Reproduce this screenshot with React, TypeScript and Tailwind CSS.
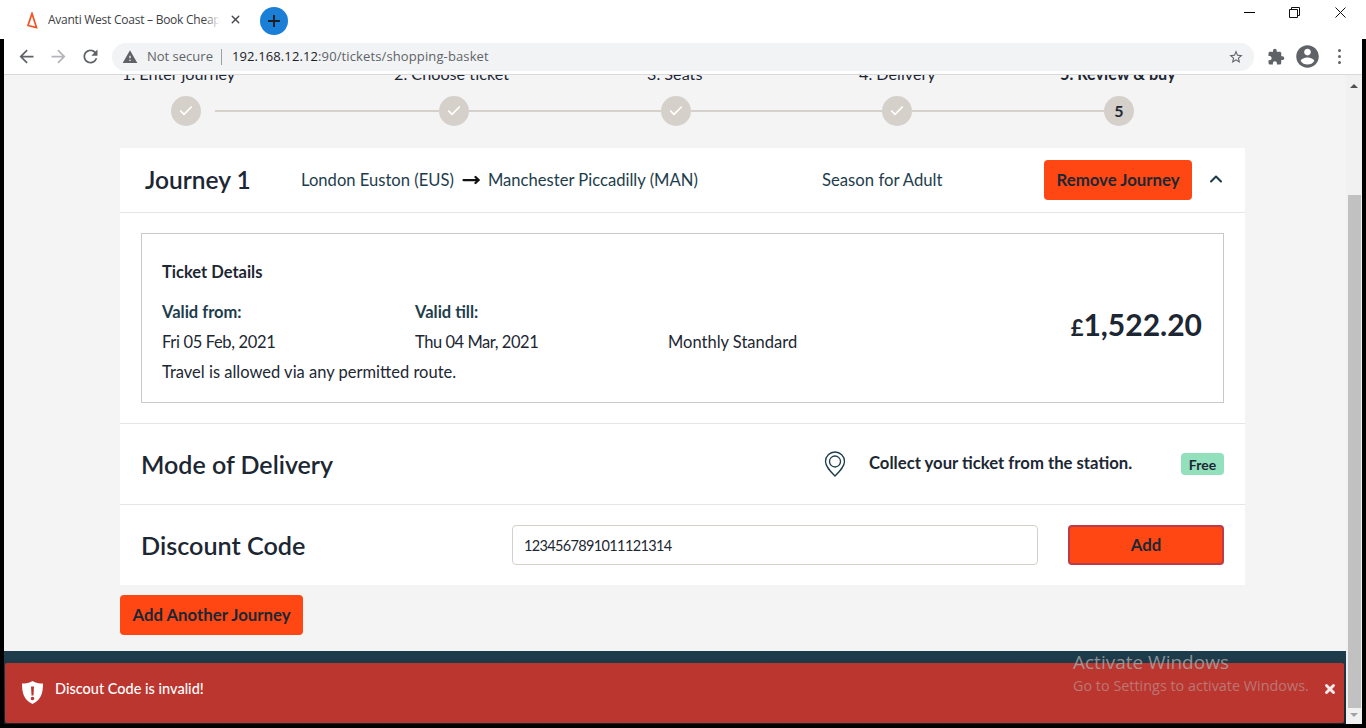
import { Check, ChevronUp, MoveRight, X } from "lucide-react";

const chromeFont = "font-['Open_Sans',sans-serif]";

const Mat = ({ d, size, color }: { d: string; size: number; color: string }) => (
  <svg width={size} height={size} viewBox="0 0 24 24" fill={color} className="shrink-0">
    <path d={d} />
  </svg>
);

const TabBar = () => (
  <div className={`h-[39px] bg-white flex items-center shrink-0 ${chromeFont}`}>
    <svg width="12" height="17" viewBox="0 0 12 17" fill="none" className="ml-[26px] mt-[2px]">
      <path d="M6 1.500 2 13.500 10.500 15.500Z" stroke="#f4511e" strokeWidth="1.700" />
    </svg>
    <div className="relative ml-[10px] w-[172px] overflow-hidden whitespace-nowrap text-[12px] tracking-[-0.25px] text-[#3c4043] mt-[1px]">
      Avanti West Coast – Book Cheap
      <span className="absolute right-0 top-0 h-full w-4 bg-gradient-to-r from-transparent to-white" />
    </div>
    <X size={13} strokeWidth={2.5} color="#45474a" className="ml-[9px]" />
    <div className="ml-[18px] mt-[3px] w-7 h-7 rounded-full bg-[#1a7fd6] flex items-center justify-center">
      <svg width="14" height="14" viewBox="0 0 14 14" stroke="#16202a" strokeWidth="2">
        <path d="M7 1v12M1 7h12" />
      </svg>
    </div>
    <div className="ml-auto flex items-center -mt-[15px]">
      <div className="w-[11px] h-px bg-black" />
      <svg width="11" height="11" viewBox="0 0 11 11" fill="none" stroke="#111" className="ml-[34px]">
        <path d="M.5 2.500h8v8h-8zM2.500 2.500v-2h8v8h-2" />
      </svg>
      <svg width="11" height="11" viewBox="0 0 11 11" fill="none" stroke="#111" className="ml-[35px] mr-[20px]">
        <path d="M.5.5l10 10M10.500.5l-10 10" />
      </svg>
    </div>
  </div>
);

const Toolbar = () => (
  <div className={`h-[36px] bg-white border-b border-[#d8d9da] flex items-center shrink-0 ${chromeFont}`}>
    <div className="ml-[12px]">
      <Mat size={21} color="#5f6368" d="M20 11H7.830l5.590-5.590L12 4l-8 8 8 8 1.410-1.410L7.830 13H20v-2z" />
    </div>
    <div className="ml-[11px]">
      <Mat size={21} color="#b4b6b9" d="M12 4l-1.410 1.410L16.170 11H4v2h12.170l-5.580 5.590L12 20l8-8z" />
    </div>
    <div className="ml-[11px]">
      <Mat
        size={21}
        color="#5f6368"
        d="M17.650 6.350C16.200 4.900 14.210 4 12 4c-4.420 0-7.990 3.580-7.990 8s3.570 8 7.990 8c3.730 0 6.840-2.550 7.730-6h-2.080c-.82 2.330-3.040 4-5.650 4-3.310 0-6-2.690-6-6s2.690-6 6-6c1.660 0 3.140.69 4.220 1.780L13 11h7V4l-2.350 2.350z"
      />
    </div>
    <div className="ml-[11px] w-[1142px] h-7 rounded-full bg-[#f1f3f4] flex items-center text-[13px]">
      <div className="ml-[10px]">
        <Mat size={16} color="#5f6368" d="M1 21h22L12 2 1 21zm12-3h-2v-2h2v2zm0-4h-2v-4h2v4z" />
      </div>
      <span className="ml-[9px] text-[#5f6368]">Not secure</span>
      <span className="ml-[8px] w-px h-[16px] bg-[#9aa0a6]" />
      <span className="ml-[10px] tracking-[0.12px] text-[#202124]">
        192.168.12.12<span className="text-[#5f6368]">:90/tickets/shopping-basket</span>
      </span>
      <div className="ml-auto mr-[10px]">
        <Mat
          size={16}
          color="#5f6368"
          d="M22 9.240l-7.190-.62L12 2 9.190 8.630 2 9.240l5.460 4.730L5.820 21 12 17.270 18.180 21l-1.630-7.030L22 9.240zM12 15.400l-3.760 2.270 1-4.280-3.320-2.880 4.380-.38L12 6.100l1.710 4.040 4.380.38-3.320 2.880 1 4.280L12 15.400z"
        />
      </div>
    </div>
    <div className="ml-[13px]">
      <Mat
        size={18}
        color="#5f6368"
        d="M20.500 11H19V7c0-1.100-.9-2-2-2h-4V3.500C13 2.120 11.880 1 10.500 1S8 2.120 8 3.500V5H4c-1.100 0-1.990.9-1.990 2v3.800H3.500c1.490 0 2.700 1.210 2.700 2.700s-1.210 2.700-2.700 2.700H2V20c0 1.100.9 2 2 2h3.800v-1.500c0-1.490 1.210-2.700 2.700-2.700 1.490 0 2.700 1.210 2.700 2.700V22H17c1.100 0 2-.9 2-2v-4h1.500c1.380 0 2.500-1.120 2.500-2.500S21.880 11 20.500 11z"
      />
    </div>
    <div className="ml-[9px]">
      <Mat
        size={27}
        color="#5f6368"
        d="M12 2C6.480 2 2 6.480 2 12s4.480 10 10 10 10-4.480 10-10S17.520 2 12 2zm0 3c1.660 0 3 1.340 3 3s-1.340 3-3 3-3-1.340-3-3 1.340-3 3-3zm0 14.200c-2.500 0-4.710-1.280-6-3.220.03-1.990 4-3.080 6-3.080 1.990 0 5.970 1.090 6 3.080-1.290 1.940-3.500 3.220-6 3.220z"
      />
    </div>
    <div className="ml-[17px] flex flex-col gap-[3px]">
      <span className="w-[3px] h-[3px] rounded-full bg-[#5f6368]" />
      <span className="w-[3px] h-[3px] rounded-full bg-[#5f6368]" />
      <span className="w-[3px] h-[3px] rounded-full bg-[#5f6368]" />
    </div>
  </div>
);

const StepCircle = ({ label }: { label?: string }) => (
  <div className="w-[30px] h-[30px] rounded-full bg-[#d5d0ca] flex items-center justify-center shrink-0 text-[16px] font-bold text-[#1c2733]">
    {label ? label : <Check size={16} strokeWidth={2.5} color="#fff" />}
  </div>
);

const Line = ({ w }: { w: string }) => <div className={`h-[2px] bg-[#d5d0ca] ${w}`} />;

const Steps = () => (
  <div className="h-[73px] shrink-0 text-[16.2px] text-[#1c2733]">
    <div className="-mt-[13px] ml-[118px] h-[22px] grid grid-cols-[272px_253px_212px_201px_auto] whitespace-nowrap">
      <span>1. Enter journey</span>
      <span>2. Choose ticket</span>
      <span>3. Seats</span>
      <span>4. Delivery</span>
      <span className="font-bold">5. Review &amp; buy</span>
    </div>
    <div className="mt-[12px] ml-[167px] flex items-center">
      <StepCircle />
      <div className="ml-[14px]" />
      <Line w="w-[224px]" />
      <StepCircle />
      <Line w="w-[192px]" />
      <StepCircle />
      <Line w="w-[191px]" />
      <StepCircle />
      <Line w="w-[192px]" />
      <StepCircle label="5" />
    </div>
  </div>
);

const OrangeButton = ({ children, className }: { children: string; className: string }) => (
  <button className={`bg-[#ff4713] rounded-[4px] text-[16.8px] font-bold text-[#1c2733] ${className}`}>
    {children}
  </button>
);

const JourneyCard = () => (
  <div className="ml-[116px] w-[1125px] bg-white shrink-0 text-[#1c2733]">
    <div className="h-[65px] flex items-center border-b border-[#e6e6e6]">
      <h2 className="ml-[25px] w-[156px] text-[24.5px] font-semibold pt-[1px]">Journey 1</h2>
      <div className="w-[521px] flex items-center text-[16.6px] text-[#1e3d4c] whitespace-nowrap">
        London Euston (EUS)
        <MoveRight size={18} strokeWidth={3} color="#111" className="mx-[8px]" />
        Manchester Piccadilly (MAN)
      </div>
      <span className="w-[222px] text-[16.7px] text-[#1e3d4c] pt-[1px]">Season for Adult</span>
      <OrangeButton className="w-[148px] h-10">Remove Journey</OrangeButton>
      <ChevronUp size={20} strokeWidth={2.5} color="#1e3d4c" className="ml-[14px] -mt-[2px]" />
    </div>
    <div className="px-[21px] py-[20px] border-b border-[#e6e6e6]">
      <div className="h-[170px] border border-[#c9c9c9] flex items-center justify-between pl-[20px] pr-[21px]">
        <div className="text-[16.5px] pt-[8px]">
          <div className="font-bold leading-[24px]">Ticket Details</div>
          <div className="mt-[16px] grid grid-cols-[253px_253px_auto] leading-[24px] text-[#1c2733]">
            <span className="font-bold text-[#1e3d4c]">Valid from:</span>
            <span className="font-bold text-[#1e3d4c]">Valid till:</span>
            <span />
            <span className="mt-[6px] tracking-[-0.35px]">Fri 05 Feb, 2021</span>
            <span className="mt-[6px] tracking-[-0.45px]">Thu 04 Mar, 2021</span>
            <span className="mt-[6px]">Monthly Standard</span>
          </div>
          <div className="mt-[6px] leading-[24px]">Travel is allowed via any permitted route.</div>
        </div>
        <div className="font-bold text-[30px] leading-none mt-[12px]">
          <span className="text-[22px]">£</span>1,522.20
        </div>
      </div>
    </div>
    <div className="h-[81px] flex items-center border-b border-[#e6e6e6] pl-[21px]">
      <h2 className="w-[683px] text-[25px] font-semibold pt-[1px]">Mode of Delivery</h2>
      <svg width="22" height="26" viewBox="0 0 22 26" fill="none" stroke="#1e3d4c" strokeWidth="1.300">
        <path d="M11 25C6 20 1.500 15.500 1.500 10.500a9.500 9.500 0 0 1 19 0C20.500 15.500 16 20 11 25Z" />
        <circle cx="11" cy="10.500" r="5.500" />
      </svg>
      <span className="ml-[23px] w-[312px] text-[16.7px] font-bold whitespace-nowrap">
        Collect your ticket from the station.
      </span>
      <span className="w-[43px] h-[22px] rounded-[4px] bg-[#93e0bd] text-[14px] font-bold flex items-center justify-center">
        Free
      </span>
    </div>
    <div className="h-[80px] flex items-center pl-[21px]">
      <h2 className="w-[371px] text-[25.2px] font-semibold pt-[1px]">Discount Code</h2>
      <input
        readOnly
        value="1234567891011121314"
        className="w-[526px] h-10 px-[11px] border border-[#d5d0ca] rounded-[4px] text-[14.5px] tracking-[-0.65px] text-[#1c2733] outline-none"
      />
      <OrangeButton className="ml-[30px] w-[156px] h-10 border-2 border-[#bc3a4a]">Add</OrangeButton>
    </div>
  </div>
);

const Toast = () => (
  <div className="absolute left-[5px] top-[663px] w-[1339px] h-[60px] bg-[#bc3630] rounded-[2px] text-white">
    <div className="flex items-start pl-[16px] pt-[17px]">
      <svg width="23" height="25" viewBox="0 0 23 25" className="shrink-0">
        <path
          fill="#fff"
          fillRule="evenodd"
          d="M11.500 1c3 2 6.500 2.500 10.500 2.500 0 9-1.500 16-10.500 20.500C2.500 19.500 1 12.500 1 3.500 5 3.500 8.500 3 11.500 1ZM10 6.500l.5 9h2l.5-9ZM11.500 16.700a1.800 1.800 0 1 0 0 3.600 1.800 1.800 0 0 0 0-3.600Z"
        />
      </svg>
      <span className="ml-[11px] -mt-[3px] text-[14.5px] font-medium leading-[24px]">Discout Code is invalid!</span>
    </div>
    <X size={14} strokeWidth={5} color="#fbeaea" className="absolute left-[1318px] top-[19px]" />
  </div>
);

const Watermark = () => (
  <div className={`absolute left-[1073px] top-[649px] ${chromeFont}`}>
    <div className="text-[19px] leading-[26px] text-[#a9a9a9]/80">Activate Windows</div>
    <div className="text-[14.4px] leading-[20px] mt-[1px] text-[#b9b9b9]/50 whitespace-nowrap">
      Go to Settings to activate Windows.
    </div>
  </div>
);

const Scrollbar = () => (
  <div className="w-4 bg-[#f1f1f1] flex flex-col items-center shrink-0">
    <div className="mt-[9px] w-0 h-0 border-x-[4px] border-x-transparent border-b-[4px] border-b-[#505050]" />
    <div className="mt-[107px] w-[13px] ml-[1px] h-[513px] bg-[#c1c1c1]" />
    <div className="mt-[5px] w-0 h-0 border-x-[4px] border-x-transparent border-t-[4px] border-t-[#a3a3a3]" />
  </div>
);

export default function App() {
  return (
    <div className="relative w-[1366px] h-[728px] overflow-hidden bg-black font-['Lato',sans-serif]">
      <TabBar />
      <div className="mx-[4px] h-[685px] flex flex-col">
        <Toolbar />
        <div className="flex-1 flex min-h-0">
          <main className="flex-1 min-w-0 bg-[#f4f4f4] flex flex-col overflow-hidden">
            <Steps />
            <JourneyCard />
            <div className="ml-[116px] mt-[10px] shrink-0">
              <OrangeButton className="w-[183px] h-10">Add Another Journey</OrangeButton>
            </div>
            <div className="mt-[16px] flex-1 bg-gradient-to-b from-[#1e3d4c] to-[#16262f]" />
          </main>
          <Scrollbar />
        </div>
      </div>
      <Toast />
      <Watermark />
    </div>
  );
}
